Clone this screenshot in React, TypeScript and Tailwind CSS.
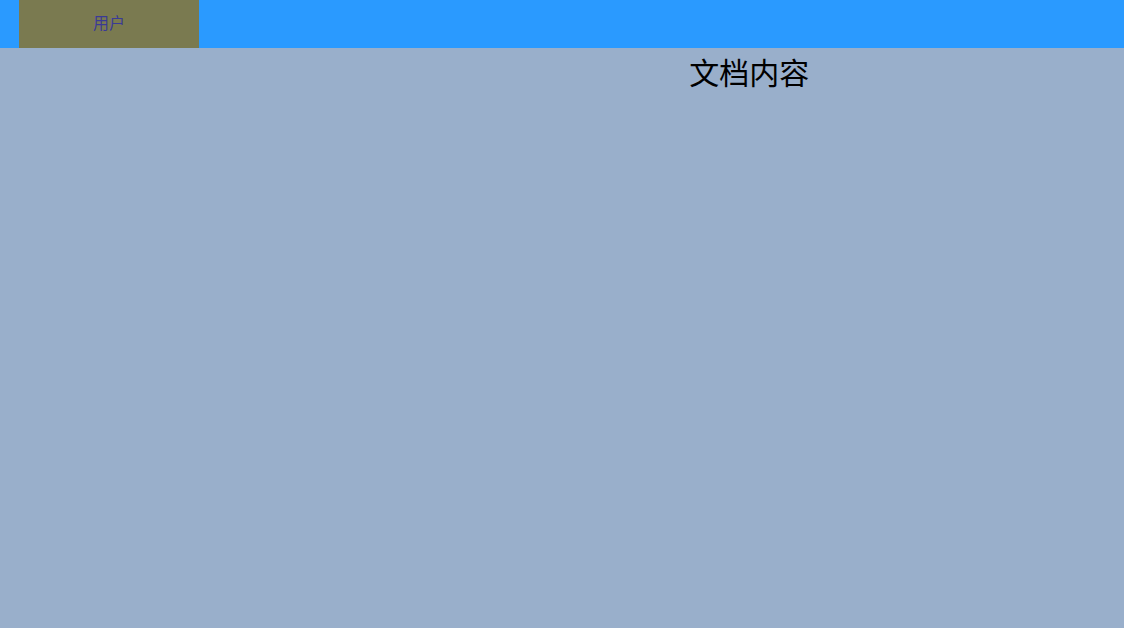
export default function App() {
  return (
    <div className="flex h-screen w-full flex-col bg-[#99afcb] font-['Noto_Sans','Noto_Sans_CJK_SC',sans-serif]">
      {/* Header */}
      <header className="flex h-12 w-full shrink-0 bg-[#2a9aff] pl-[19px]">
        <div className="flex h-12 w-[180px] items-center justify-center bg-[#7a7a50] pb-[2px] text-base text-[#3a3a96]">
          用户
        </div>
      </header>

      {/* Body */}
      <div className="flex flex-1">
        <aside className="w-1/3" />
        <main className="flex-1">
          <h1 className="mt-[4px] text-center text-[30px] leading-[1.4] text-black">文档内容</h1>
        </main>
      </div>
    </div>
  );
}
